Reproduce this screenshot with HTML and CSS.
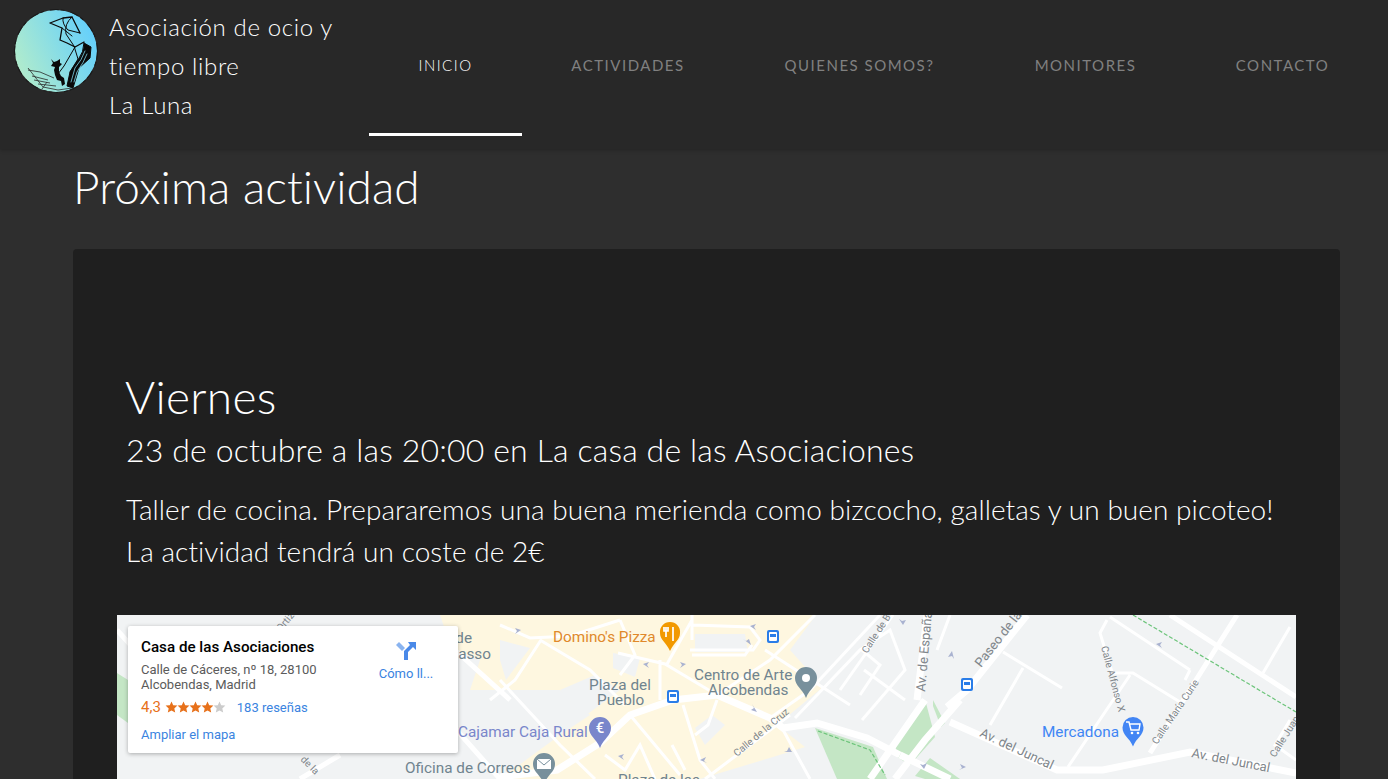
FILE: index.html
```html
<!DOCTYPE html>
<html lang="es">
<head>
<meta charset="utf-8">
<title>La Luna</title>
<link rel="stylesheet" href="styles.css">
</head>
<body>
<header class="topbar">
  <a class="brand" href="#">
    <svg class="logo" viewBox="0 0 90 90" width="90" height="90" aria-hidden="true">
      <defs><linearGradient id="moon" x1="0" y1="0.75" x2="1" y2="0.3"><stop offset="0" stop-color="#b4edca"/><stop offset="1" stop-color="#63cffd"/></linearGradient></defs>
      <circle cx="44" cy="47" r="41" fill="url(#moon)"/>
      <circle cx="44" cy="47" r="41.500" fill="none" stroke="#1a1a1a" stroke-width="1.100" stroke-dasharray="9 2 4 6"/>
      <g fill="none" stroke="#0a0a0a" stroke-linecap="round" stroke-linejoin="round">
        <path d="M38 19 L51 14 L60 13 L65 23 L68 29 M38 19 L50 24 L48 36 L55 39 L63 43 L72 38" stroke-width="1.300"/>
        <path d="M60 13 Q52 20 54 30 L62 42 L66 55 L58 68 M51 14 Q50 20 56 26 L68 29 M50 24 L60 32 M63 43 L52 62 L46 70" stroke-width="1"/>
        <path d="M72 39 L79 43 L78 54 L67 64 L61 84 L55 82 L58 68 L66 56 Q72 48 72 39 Z" fill="#0a0a0a" stroke-width="1"/>
        <path d="M73 47 Q70 56 63 64 L59 78 M75 50 Q72 58 65 68 L62 78" stroke="#7fd6ea" stroke-width=".8"/>
      </g>
      <path fill="#0a0a0a" d="M39 55l3 3 3-1 3-2 0 4 2 1-3 3 0 5 2 4 3 2 1 6-3 2-1-5-4-1-2-5-1-5 1-3-4-1 2-3z"/>
      <g fill="none" stroke="#2a2a2a" stroke-width=".8"><path d="M16 64 L31 83 M16 66 L28 68 L42 74 M20 72 L36 76 M22 76 L38 79 M26 80 L44 82 M31 83 L46 86 L60 84 M28 86 L44 89 M35 78 L30 85"/></g>
    </svg>
    <span class="brand-text">Asociación de ocio y<br>tiempo libre<br>La Luna</span>
  </a>
  <nav class="menu">
    <a class="menu-item active" href="#">INICIO</a>
    <a class="menu-item" href="#">ACTIVIDADES</a>
    <a class="menu-item" href="#">QUIENES SOMOS?</a>
    <a class="menu-item" href="#">MONITORES</a>
    <a class="menu-item" href="#">CONTACTO</a>
  </nav>
</header>
<main class="content">
  <h1 class="page-title">Próxima actividad</h1>
  <section class="card">
    <h2 class="day">Viernes</h2>
    <h3 class="when">23 de octubre a las 20:00 en La casa de las Asociaciones</h3>
    <p class="desc">Taller de cocina. Prepararemos una buena merienda como bizcocho, galletas y un buen picoteo!<br>La actividad tendrá un coste de 2€</p>
    <div class="map">
      <svg class="map-art" viewBox="117 615 1179 164" width="1179" height="164" aria-hidden="true">
        <rect x="117" y="615" width="1179" height="164" fill="#f1f3f4"/>
        <path class="beige" d="M440 615H816L790 650L823 687L777 725L805 747L773 757L700 779H583L500 779L560 735L590 715L560 690L470 690L480 660L452 650Z"/>
        <path class="gray" d="M500 640L530 648L506 680L500 660Z M695 634H745L748 652H695Z M560 690L595 675L620 690L585 716Z M712 715L725 725L705 745L695 728Z M613 653L640 658L635 677L613 668Z"/>
        <path class="green" d="M117 673L128 680V723L117 715Z"/>
        <path class="green" d="M815 728L873 747L887 779H837Z"/>
        <path class="green" d="M919 707L926 703L935 737L910 765L897 757L895 743Z"/>
        <path class="green" d="M933 700L945 723L941 727L933 706Z"/>
        <path class="green" d="M930 758L960 779H925L915 776Z"/>
        <g class="road-s">
          <path d="M500 625L530 638L570 636L620 620 M540 640L590 670L625 705 M500 680L560 745L595 779 M541 640L515 680L490 700 M620 620L635 655L620 675"/>
          <path d="M618 653L665 664L717 695 M660 660V700 M667 664L692 620 M692 640V615 M693 625L750 627L760 640L753 650H690 M692 655H745L752 645"/>
          <path d="M683 705L700 760L715 779 M717 700L708 725L695 735 M672 745L685 770 M630 715L680 775 M605 755L625 770 L640 745L655 779 M815 615L770 660L717 695"/>
          <path d="M765 650L850 705 M770 718L810 690L880 615 M795 718L860 650L890 630L905 670L862 720 M893 615L840 690 M864 670L905 700 M862 650L880 665L860 695"/>
          <path d="M705 779L790 715 M782 728L810 779 M1003 652L1062 688 M1023 668L990 725 M1130 675L1068 767 M1113 673H1133L1180 702 M1107 620L1100 633L1112 672 M1290 627L1263 673"/>
          <path d="M1110 617L1190 670 M1190 670L1185 680 M950 615L937 650 M1296 760L1275 745L1290 720"/>
        </g>
        <g class="road-n">
          <path d="M1170 615L1296 697 M1237 615L1150 753 M117 630L180 700 M430 700L500 779 M300 779L340 755 M455 650L510 700"/>
        </g>
        <g class="road-m">
          <path d="M500 777L557 770L600 743L630 715L673 700L717 695L770 718L783 728L817 723L867 738L900 755"/>
          <path d="M950 722L1057 770H1103L1190 752L1296 773"/>
          <path d="M1027 615L967 690L947 707 M927 615L917 700 M925 700L870 779 M960 700L925 740L895 779 M900 755L950 779"/>
        </g>
        <path class="dash" d="M1133 615L1296 712 M818 731L870 750 L885 775"/>
        <g class="arrows">
          <path d="M521 630l-6 -2 2 3-2 3z M686 664l-6-2 2 3-2 3z M750 626l6 -2 -2 3 2 3z M751 645l-2 -6 -3 2 -3-2z M643 664l6-2-2 3 2 3z M757 712l-6-2 3-2-2-4z M618 756l6-2-2 3 2 3z M700 760l6-3-2 4 3 2z M792 752l-3-5-2 4-3 1z M1156 644l6-2-2 3 2 3z M952 651l-4 6 4-1 2 3z M903 625l3-5-4 1-3-2z M924 769l3-6-4 2-3-1z M966 767l-6-3 2 4-3 2z"/>
        </g>
        <text class="lb grey" x="472" y="643" text-anchor="end">de</text>
        <text class="lb grey" x="491" y="659" text-anchor="end">asso</text>
        <text class="lb orange" x="553" y="642">Domino's Pizza</text>
        <path d="M670 622a10 10 0 0 1 10 11c0 7-6 9-10 18c-4-9-10-11-10-18a10 10 0 0 1 10-11z" fill="#f29900"/>
        <path d="M666 627v10M668 627v4h-4v-4M673 627v14" stroke="#fff" stroke-width="1.700" fill="none"/>
        <rect x="767" y="630" width="12" height="13" rx="2" fill="#2a7de8"/>
        <rect x="769" y="632" width="8" height="9" rx="1" fill="#fff"/><rect x="770" y="634" width="6" height="3" fill="#2a7de8"/>
        <text class="lb grey" x="694" y="680">Centro de Arte</text>
        <text class="lb grey" x="708" y="695">Alcobendas</text>
        <path d="M806 667a11 11 0 0 1 11 11c0 8-7 10-11 20c-4-10-11-12-11-20a11 11 0 0 1 11-11z" fill="#78909c"/><circle cx="806" cy="678" r="4" fill="#fff"/>
        <text class="lb grey" x="589" y="690">Plaza del</text>
        <text class="lb grey" x="597" y="705">Pueblo</text>
        <rect x="667" y="690" width="12" height="13" rx="2" fill="#2a7de8"/>
        <rect x="669" y="692" width="8" height="9" rx="1" fill="#fff"/><rect x="670" y="694" width="6" height="3" fill="#2a7de8"/>
        <text class="lb violet" x="458" y="737">Cajamar Caja Rural</text>
        <path d="M600 717a11 11 0 0 1 11 11c0 8-7 10-11 20c-4-10-11-12-11-20a11 11 0 0 1 11-11z" fill="#7986cb"/>
        <text class="glyph" x="600" y="733" text-anchor="middle">€</text>
        <text class="lb grey" x="405" y="773">Oficina de Correos</text>
        <path d="M544 753a11 11 0 0 1 11 11c0 8-7 10-11 20c-4-10-11-12-11-20a11 11 0 0 1 11-11z" fill="#78909c"/>
        <rect x="537" y="759" width="14" height="10" fill="#fff"/><path d="M537 759l7 6 7-6" stroke="#78909c" fill="none"/>
        <text class="lb grey" x="618" y="785">Plaza de las</text>
        <text class="st" transform="translate(737 757) rotate(-40)">Calle de la Cruz</text>
        <text class="st" transform="translate(300 760) rotate(45)">de la</text>
        <text class="st" transform="translate(281 632) rotate(-50)">Ortiz</text>
        <text class="st" transform="translate(867 654) rotate(-57)">Calle de B</text>
        <text class="st big" transform="translate(925 692) rotate(-85)">Av. de España</text>
        <text class="st big" transform="translate(981 668) rotate(-52)">Paseo de la</text>
        <text class="st" transform="translate(1101 647) rotate(75)">Calle Alfonso X</text>
        <text class="st" transform="translate(1157 745) rotate(-56)">Calle María Curie</text>
        <text class="st" transform="translate(1275 758) rotate(-58)">Calle Juan</text>
        <text class="st big" transform="translate(979 736) rotate(25)">Av. del Juncal</text>
        <text class="st big" transform="translate(1191 757) rotate(11)">Av. del Juncal</text>
        <text class="lb blue" x="1042" y="737">Mercadona</text>
        <path d="M1133 717a10.500 10.500 0 0 1 10.500 10.500c0 8-7 10-10.500 19c-3.500-9-10.500-11-10.500-19a10.500 10.500 0 0 1 10.500-10.500z" fill="#4285f4"/>
        <path d="M1126 722h3l2 8h8l1-6h-10" stroke="#fff" stroke-width="1.400" fill="none"/><circle cx="1132" cy="733" r="1.300" fill="#fff"/><circle cx="1138" cy="733" r="1.300" fill="#fff"/>
        <rect x="961" y="678" width="12" height="13" rx="2" fill="#2a7de8"/>
        <rect x="963" y="680" width="8" height="9" rx="1" fill="#fff"/><rect x="964" y="682" width="6" height="3" fill="#2a7de8"/>
      </svg>
      <div class="place">
        <div class="place-main">
          <div class="place-name">Casa de las Asociaciones</div>
          <div class="place-addr">Calle de Cáceres, nº 18, 28100<br>Alcobendas, Madrid</div>
          <div class="place-rate">
            <span class="score">4,3</span>
            <svg class="stars" viewBox="0 0 60 12" width="61" height="12" aria-hidden="true">
              <defs>
                <path id="st" d="M6 .4l1.700 3.800 4.200.4-3.100 2.800.9 4.100L6 9.400l-3.700 2.100.9-4.100L.1 4.600l4.200-.4z"/>
                <clipPath id="half"><rect x="48" y="0" width="7" height="12"/></clipPath>
              </defs>
              <use href="#st" fill="#e7711b"/><use href="#st" x="12" fill="#e7711b"/><use href="#st" x="24" fill="#e7711b"/><use href="#st" x="36" fill="#e7711b"/>
              <use href="#st" x="48" fill="#ccc"/><use href="#st" x="48" fill="#e7711b" clip-path="url(#half)"/>
            </svg>
            <a class="reviews" href="#">183 reseñas</a>
          </div>
          <a class="enlarge" href="#">Ampliar el mapa</a>
        </div>
        <a class="directions" href="#">
          <svg viewBox="0 0 22 22" width="22" height="22" aria-hidden="true"><path d="M13 2h8v8l-3-3-5 5v8H9v-9l6-6z" fill="#4a89e8"/><path d="M1 5l3-3 6 6-3 3z" fill="#8ab4f0"/></svg>
          <span>Cómo ll...</span>
        </a>
      </div>
    </div>
  </section>
</main>
</body>
</html>
```
FILE: styles.css
```css
html, body {
  margin: 0;
  height: 779px;
  overflow: hidden;
}
body {
  background: #2e2e2e;
  color: #fff;
  font-family: Lato, "Noto Sans", sans-serif;
  font-weight: 300;
}
a { text-decoration: none; color: inherit; }

.topbar {
  display: flex;
  height: 149px;
  background: #282828;
  box-shadow: 0 1px 4px rgba(0, 0, 0, .25);
  position: relative;
}
.brand {
  display: flex;
  width: 369px;
  flex: none;
  padding: 4px 0 0 12px;
  box-sizing: border-box;
}
.logo { flex: none; }
.brand-text {
  margin: 3px 0 0 7px;
  font-size: 24px;
  line-height: 39px;
  letter-spacing: .65px;
  white-space: nowrap;
  font-weight: 300;
}
.menu {
  display: grid;
  grid-template-columns: 153px 212px 251px 201px 193px;
  height: 136px;
}
.menu-item {
  text-align: center;
  font-size: 15px;
  line-height: 131px;
  letter-spacing: 1.500px;
  color: #808080;
  font-weight: 400;
}
.menu-item.active {
  color: #fff;
  font-weight: 300;
  border-bottom: 3px solid #fff;
  box-sizing: border-box;
}

.content { padding: 0 48px 0 73px; }
.page-title {
  margin: 0;
  padding: 12px 0 0;
  height: 88px;
  font-size: 46px;
  line-height: 52px;
  font-weight: 300;
  letter-spacing: .07px;
}
.card {
  background: #1f1f1f;
  border-radius: 4px;
  padding: 120px 44px 0;
  height: 540px;
  box-sizing: border-box;
}
.day {
  margin: 0 0 0 8px;
  font-size: 46px;
  line-height: 56px;
  font-weight: 300;
  letter-spacing: .3px;
}
.when {
  margin: 5px 0 0 9px;
  font-size: 32px;
  line-height: 40px;
  font-weight: 300;
  letter-spacing: .15px;
}
.desc {
  margin: 18px 0 0 9px;
  font-size: 28px;
  line-height: 42px;
  white-space: nowrap;
  letter-spacing: .06px;
}
.map {
  position: relative;
  margin-top: 43px;
  height: 164px;
  overflow: hidden;
}
.map-art { display: block; }
.beige { fill: #fef7e0; }
.gray { fill: #f1f3f4; }
.green { fill: #c4e6c5; }
.road-s { fill: none; stroke: #fff; stroke-width: 3; }
.road-n { fill: none; stroke: #fff; stroke-width: 5; }
.road-m { fill: none; stroke: #fff; stroke-width: 7; }
.dash { fill: none; stroke: #6cc47a; stroke-width: 1.200; stroke-dasharray: 4 2; }
.arrows { fill: #a9b2d0; }
.lb { font-family: Roboto, sans-serif; font-size: 15.300px; font-weight: 400; }
.grey { fill: #70848f; }
.orange { fill: #e0892b; }
.violet { fill: #7986cb; }
.blue { fill: #3f86f4; }
.glyph { font-family: Roboto, sans-serif; font-size: 15px; font-weight: 500; fill: #fff; }
.st { font-family: Roboto, sans-serif; font-size: 10px; font-weight: 400; fill: #80868b; }
.st.big { font-size: 13px; }

.place {
  position: absolute;
  left: 11px;
  top: 11px;
  width: 330px;
  height: 127px;
  background: #fff;
  border-radius: 2px;
  box-shadow: 0 1px 4px rgba(0, 0, 0, .3);
  display: flex;
  box-sizing: border-box;
  padding: 11px 0 0 13px;
  font-family: Roboto, sans-serif;
  font-weight: 400;
  color: #5b5b5b;
  font-size: 13px;
}
.place-main { width: 233px; flex: none; }
.place-name {
  font-size: 15.200px;
  line-height: 20px;
  font-weight: 500;
  color: #000;
}
.place-addr { margin-top: 5px; line-height: 15px; }
.place-rate {
  display: flex;
  align-items: center;
  margin-top: 7px;
  height: 16px;
}
.score { font-size: 15px; color: #e7711b; margin-right: 4px; }
.stars { flex: none; }
.reviews { margin-left: 11px; color: #3a84df; }
.enlarge { display: block; margin-top: 12px; line-height: 15px; color: #3a84df; }
.directions {
  display: flex;
  flex-direction: column;
  align-items: center;
  width: 64px;
  padding-top: 3px;
  color: #3a84df;
}
.directions span { margin-top: 4px; line-height: 15px; white-space: nowrap; }
```
